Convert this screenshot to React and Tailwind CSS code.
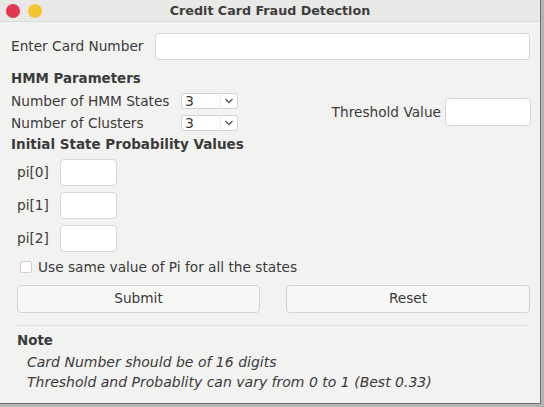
import React from 'react';

const font = { fontFamily: '"DejaVu Sans", sans-serif' };

const Combo = () => (
    <div className="w-[57px] h-[16px] bg-white border border-[#d3d3d3] rounded-[3px] flex items-center">
        <span className="flex-1 pl-[3px] text-[14px] leading-none text-[#3a3a3a]">3</span>
        <span className="w-px h-[12px] bg-[#ececec]"></span>
        <svg width="16" height="14" viewBox="0 0 16 14" className="text-[#555]">
            <path d="M4.5 5 L8 8.5 L11.5 5" fill="none" stroke="currentColor" strokeWidth="1.3" />
        </svg>
    </div>
);

const Box = ({ className }) => (
    <div className={`bg-white border border-[#d6d6d6] rounded-[4px] ${className}`}></div>
);

const App = () => {
    return (
        <div className="w-[544px] h-[407px] bg-[#b4b4b4] overflow-hidden text-[#3a3a3a]" style={font}>
            <div className="w-[541px] h-[404px] bg-[#f2f2f1] border-r border-b border-[#6f6f6f] flex flex-col">
                {/* title bar */}
                <div className="h-[22px] bg-[#e8e8e7] border-b border-[#dadada] flex items-center relative">
                    <div className="flex gap-[8px] pl-[6px]">
                        <span className="w-[14px] h-[14px] rounded-full bg-[#e2354f]"></span>
                        <span className="w-[14px] h-[14px] rounded-full bg-[#f2c531]"></span>
                    </div>
                    <div className="absolute inset-0 flex items-center justify-center text-[12.7px] font-bold text-[#3d3d3d]">
                        Credit Card Fraud Detection
                    </div>
                </div>

                <div className="flex flex-col pl-[11px] pr-[9px] text-[13.7px]">
                    <div className="flex items-center mt-[11px] h-[27px]">
                        <span className="w-[144px]">Enter Card Number</span>
                        <Box className="w-[375px] h-[27px]" />
                    </div>

                    <div className="font-bold text-[13.4px] mt-[11px] leading-[16px]">HMM Parameters</div>

                    <div className="flex items-center mt-[3px]">
                        <div className="flex flex-col">
                            <div className="flex items-center h-[22px]">
                                <span className="w-[170px]">Number of HMM States</span>
                                <Combo />
                            </div>
                            <div className="flex items-center h-[22px]">
                                <span className="w-[170px]">Number of Clusters</span>
                                <Combo />
                            </div>
                        </div>
                        <div className="flex-1 flex items-center justify-end">
                            <span className="mr-[4px]">Threshold Value</span>
                            <Box className="w-[86px] h-[28px]" />
                        </div>
                    </div>

                    <div className="font-bold text-[13.5px] mt-[2px] leading-[16px]">Initial State Probability Values</div>

                    <div className="flex flex-col gap-[6px] mt-[7px] pl-[6px]">
                        {[0, 1, 2].map((i) => (
                            <div key={i} className="flex items-center">
                                <span className="w-[43px]">pi[{i}]</span>
                                <Box className="w-[57px] h-[27px]" />
                            </div>
                        ))}
                    </div>

                    <div className="flex items-center mt-[5px] pl-[9px]">
                        <span className="w-[12px] h-[12px] bg-white border border-[#cfcfcf] rounded-[2px]"></span>
                        <span className="ml-[6px]">Use same value of Pi for all the states</span>
                    </div>

                    <div className="flex gap-[26px] mt-[7px] pl-[6px]">
                        <button className="w-[243px] h-[28px] bg-[#f7f7f6] border border-[#d2d2d2] rounded-[4px] text-[13.7px] text-[#3a3a3a]">Submit</button>
                        <button className="w-[244px] h-[28px] bg-[#f7f7f6] border border-[#d2d2d2] rounded-[4px] text-[13.7px] text-[#3a3a3a]">Reset</button>
                    </div>

                    <div className="h-px bg-[#dedede] ml-[6px] mr-[3px] mt-[12px]"></div>

                    <div className="pl-[6px] mt-[5px] font-bold text-[13.4px]">Note</div>
                    <div className="pl-[16px] italic mt-[1px] leading-[20px] text-[14px]">
                        <div>Card Number should be of 16 digits</div>
                        <div>Threshold and Probablity can vary from 0 to 1 (Best 0.33)</div>
                    </div>
                </div>
            </div>
        </div>
    );
};

export default App;
